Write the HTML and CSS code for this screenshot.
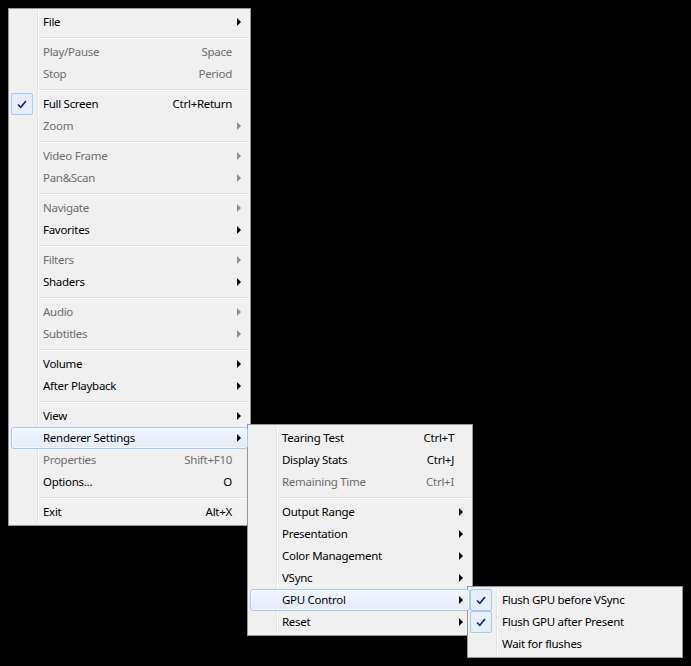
FILE: index.html
```html
<!DOCTYPE html>
<html>
<head>
<meta charset="utf-8">
<link rel="stylesheet" href="styles.css">
</head>
<body>
<div class="desktop">
  <div class="menu main-menu">
    <div class="item"><span class="label">File</span><span class="arrow"></span></div>
    <div class="sep"></div>
    <div class="item disabled"><span class="label">Play/Pause</span><span class="key">Space</span><span class="slot"></span></div>
    <div class="item disabled"><span class="label">Stop</span><span class="key">Period</span><span class="slot"></span></div>
    <div class="sep"></div>
    <div class="item checked"><span class="check"><svg width="10" height="9" viewBox="0 0 10 9"><path d="M1 4.5 L3.8 7.3 L9 1" fill="none" stroke="#13268a" stroke-width="1.7"/></svg></span><span class="label">Full Screen</span><span class="key">Ctrl+Return</span><span class="slot"></span></div>
    <div class="item disabled"><span class="label">Zoom</span><span class="arrow"></span></div>
    <div class="sep"></div>
    <div class="item disabled"><span class="label">Video Frame</span><span class="arrow"></span></div>
    <div class="item disabled"><span class="label">Pan&amp;Scan</span><span class="arrow"></span></div>
    <div class="sep"></div>
    <div class="item disabled"><span class="label">Navigate</span><span class="arrow"></span></div>
    <div class="item"><span class="label">Favorites</span><span class="arrow"></span></div>
    <div class="sep"></div>
    <div class="item disabled"><span class="label">Filters</span><span class="arrow"></span></div>
    <div class="item"><span class="label">Shaders</span><span class="arrow"></span></div>
    <div class="sep"></div>
    <div class="item disabled"><span class="label">Audio</span><span class="arrow"></span></div>
    <div class="item disabled"><span class="label">Subtitles</span><span class="arrow"></span></div>
    <div class="sep"></div>
    <div class="item"><span class="label">Volume</span><span class="arrow"></span></div>
    <div class="item"><span class="label">After Playback</span><span class="arrow"></span></div>
    <div class="sep"></div>
    <div class="item"><span class="label">View</span><span class="arrow"></span></div>
    <div class="item active"><span class="label">Renderer Settings</span><span class="arrow"></span></div>
    <div class="item disabled"><span class="label">Properties</span><span class="key">Shift+F10</span><span class="slot"></span></div>
    <div class="item"><span class="label">Options...</span><span class="key">O</span><span class="slot"></span></div>
    <div class="sep"></div>
    <div class="item"><span class="label">Exit</span><span class="key">Alt+X</span><span class="slot"></span></div>
  </div>

  <div class="menu renderer-menu">
    <div class="item"><span class="label">Tearing Test</span><span class="key">Ctrl+T</span><span class="slot"></span></div>
    <div class="item"><span class="label">Display Stats</span><span class="key">Ctrl+J</span><span class="slot"></span></div>
    <div class="item disabled"><span class="label">Remaining Time</span><span class="key">Ctrl+I</span><span class="slot"></span></div>
    <div class="sep"></div>
    <div class="item"><span class="label">Output Range</span><span class="arrow"></span></div>
    <div class="item"><span class="label">Presentation</span><span class="arrow"></span></div>
    <div class="item"><span class="label">Color Management</span><span class="arrow"></span></div>
    <div class="item"><span class="label">VSync</span><span class="arrow"></span></div>
    <div class="item active"><span class="label">GPU Control</span><span class="arrow"></span></div>
    <div class="item"><span class="label">Reset</span><span class="arrow"></span></div>
  </div>

  <div class="menu gpu-menu">
    <div class="item checked"><span class="check"><svg width="10" height="9" viewBox="0 0 10 9"><path d="M1 4.5 L3.8 7.3 L9 1" fill="none" stroke="#13268a" stroke-width="1.7"/></svg></span><span class="label">Flush GPU before VSync</span></div>
    <div class="item checked"><span class="check"><svg width="10" height="9" viewBox="0 0 10 9"><path d="M1 4.5 L3.8 7.3 L9 1" fill="none" stroke="#13268a" stroke-width="1.7"/></svg></span><span class="label">Flush GPU after Present</span></div>
    <div class="item"><span class="label">Wait for flushes</span></div>
  </div>
</div>
</body>
</html>
```
FILE: styles.css
```css
html, body {
  margin: 0;
  padding: 0;
  background: #000;
}

.desktop {
  position: relative;
  width: 691px;
  height: 666px;
  padding: 8px 0 0 8px;
  box-sizing: border-box;
  font-family: "Noto Sans", "Open Sans", sans-serif;
  font-size: 11.5px;
  letter-spacing: -0.28px;
  color: #000;
}

.menu {
  position: relative;
  box-sizing: border-box;
  background: #f0f0f0;
  border: 1px solid #979797;
  padding: 2px;
}

.menu::before {
  content: "";
  position: absolute;
  top: 2px;
  bottom: 2px;
  left: 28px;
  width: 1px;
  background: #e2e3e3;
  border-right: 1px solid #ffffff;
}

.main-menu {
  width: 243px;
}

.renderer-menu {
  position: absolute;
  left: 247px;
  top: 424px;
  width: 226px;
}

.gpu-menu {
  position: absolute;
  left: 467px;
  top: 586px;
  width: 216px;
  padding-right: 4px;
}

.item {
  position: relative;
  display: flex;
  align-items: center;
  height: 22px;
  line-height: 22px;
  padding-left: 32px;
  box-sizing: border-box;
  white-space: nowrap;
  z-index: 1;
}

.item .label {
  flex: 1;
}

.item.disabled {
  color: #6d6d6d;
}

.key {
  text-align: right;
}

.slot {
  width: 16px;
  flex: none;
}

.arrow {
  width: 16px;
  flex: none;
  display: flex;
  align-items: center;
  justify-content: flex-start;
  padding-left: 5px;
  box-sizing: border-box;
}

.arrow::before {
  content: "";
  width: 0;
  height: 0;
  border-left: 4px solid #000;
  border-top: 4px solid transparent;
  border-bottom: 4px solid transparent;
}

.item.disabled .arrow::before {
  border-left-color: #8d8d8d;
}

.item.active {
  border: 1px solid #a9c9ef;
  border-radius: 3px;
  padding-left: 31px;
  background: linear-gradient(#f1f6fd, #e3ecf9);
  box-shadow: inset 0 0 0 1px rgba(255, 255, 255, 0.6);
}

.item.active .arrow {
  width: 15px;
}

.sep {
  height: 1px;
  margin: 4px 0 2px 28px;
  background: #e0e0e0;
  border-bottom: 1px solid #ffffff;
}

.check {
  position: absolute;
  left: 0;
  top: 0;
  width: 22px;
  height: 22px;
  box-sizing: border-box;
  border: 1px solid #a9cbf0;
  border-radius: 2px;
  background: #e6eefa;
  display: flex;
  align-items: center;
  justify-content: center;
}

.check svg {
  display: block;
}
```
